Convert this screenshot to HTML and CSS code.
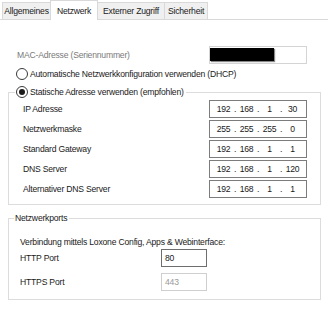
FILE: index.html
```html
<!DOCTYPE html>
<html lang="de">
<head>
<meta charset="utf-8">
<title>Netzwerk</title>
<link rel="stylesheet" href="styles.css">
</head>
<body>
<div class="tabs">
  <div class="tab tab-allg">Allgemeines</div>
  <div class="tab tab-netz active">Netzwerk</div>
  <div class="tab tab-ext">Externer Zugriff</div>
  <div class="tab tab-sich">Sicherheit</div>
</div>
<div class="panel">
  <div class="mac-row">
    <span class="mac-label">MAC-Adresse (Seriennummer)</span>
    <div class="mac-box"><div class="redact"></div></div>
  </div>
  <div class="radio-row">
    <span class="radio"></span>
    <span>Automatische Netzwerkkonfiguration verwenden (DHCP)</span>
  </div>
  <fieldset class="group group-static">
    <legend class="legend legend-radio"><span class="radio checked"></span><span>Statische Adresse verwenden (empfohlen)</span></legend>
    <div class="group-body static-body">
      <div class="field-row">
        <span>IP Adresse</span>
        <div class="ipbox"><span class="oct">192</span><span class="dot">.</span><span class="oct">168</span><span class="dot">.</span><span class="oct">1</span><span class="dot">.</span><span class="oct">30</span></div>
      </div>
      <div class="field-row">
        <span>Netzwerkmaske</span>
        <div class="ipbox"><span class="oct">255</span><span class="dot">.</span><span class="oct">255</span><span class="dot">.</span><span class="oct">255</span><span class="dot">.</span><span class="oct">0</span></div>
      </div>
      <div class="field-row">
        <span>Standard Gateway</span>
        <div class="ipbox"><span class="oct">192</span><span class="dot">.</span><span class="oct">168</span><span class="dot">.</span><span class="oct">1</span><span class="dot">.</span><span class="oct">1</span></div>
      </div>
      <div class="field-row">
        <span>DNS Server</span>
        <div class="ipbox"><span class="oct">192</span><span class="dot">.</span><span class="oct">168</span><span class="dot">.</span><span class="oct">1</span><span class="dot">.</span><span class="oct">120</span></div>
      </div>
      <div class="field-row">
        <span>Alternativer DNS Server</span>
        <div class="ipbox"><span class="oct">192</span><span class="dot">.</span><span class="oct">168</span><span class="dot">.</span><span class="oct">1</span><span class="dot">.</span><span class="oct">1</span></div>
      </div>
    </div>
  </fieldset>
  <fieldset class="group group-ports">
    <legend class="legend legend-text">Netzwerkports</legend>
    <div class="group-body ports-body">
      <div class="ports-note">Verbindung mittels Loxone Config, Apps &amp; Webinterface:</div>
      <div class="port-row">
        <span>HTTP Port</span>
        <div class="portbox">80</div>
      </div>
      <div class="port-row port-row-2">
        <span>HTTPS Port</span>
        <div class="portbox disabled">443</div>
      </div>
    </div>
  </fieldset>
</div>
</body>
</html>
```

FILE: styles.css
```css
* { box-sizing: border-box; }

html, body {
  margin: 0;
  padding: 0;
  background: #ffffff;
}

body {
  width: 328px;
  height: 330px;
  overflow: hidden;
  font-family: "Liberation Sans", Arial, sans-serif;
  font-size: 8.6px;
  letter-spacing: -0.2px;
  color: #1a1a1a;
}

/* Tabs */
.tabs {
  display: flex;
  align-items: flex-end;
  height: 20px;
  padding-left: 2px;
  border-bottom: 1px solid #d9d9d9;
}

.tab {
  height: 17px;
  line-height: 16px;
  text-align: center;
  background: #f0f0f0;
  border: 1px solid #d9d9d9;
  border-bottom: none;
  margin-left: -1px;
  white-space: nowrap;
}

.tab:first-child { margin-left: 0; }

.tab.active {
  height: 20px;
  line-height: 20px;
  margin-bottom: -1px;
  background: #ffffff;
}

.tab-allg { width: 49px; }
.tab-netz { width: 48px; }
.tab-ext { width: 68px; }
.tab-sich { width: 44px; }

/* Panel */
.panel {
  padding-top: 26px;
}

.mac-row {
  display: flex;
  align-items: center;
  height: 18px;
  padding-left: 17px;
  padding-right: 21px;
}

.mac-label {
  flex: 1;
  color: #7a7a7a;
}

.mac-box {
  width: 98px;
  height: 18px;
  border: 1px solid #d4d4d4;
  padding: 1px 0 0 0;
}

.redact {
  width: 64px;
  height: 13px;
  background: #000;
  box-shadow: 1px 1px 1px #888;
}

.radio-row {
  display: flex;
  align-items: center;
  gap: 2px;
  height: 16px;
  margin-top: 2px;
  padding-left: 16px;
}

.radio {
  display: inline-flex;
  align-items: center;
  justify-content: center;
  width: 12px;
  height: 12px;
  border: 1px solid #3a3a3a;
  border-radius: 50%;
  background: #fff;
  flex: none;
}

.radio.checked::after {
  content: "";
  width: 6px;
  height: 6px;
  border-radius: 50%;
  background: #1a1a1a;
}

/* Group boxes */
.group {
  margin: 2px 7px 0 8px;
  padding: 0;
  min-width: 0;
  border: 1px solid #dcdcdc;
}

.legend {
  height: 16px;
  display: flex;
  align-items: center;
  gap: 2px;
  padding: 0 2px 0 1px;
}

.legend-radio { margin-left: 6px; }
.legend-text { margin-left: 5px; }

.static-body {
  padding: 0 13px 6px 14px;
  display: flex;
  flex-direction: column;
  gap: 2px;
}

.field-row {
  display: flex;
  align-items: center;
  justify-content: space-between;
  height: 18px;
}

.ipbox {
  width: 98px;
  height: 18px;
  border: 1px solid #7c7c7c;
  display: flex;
  align-items: center;
  padding-left: 4px;
}

.oct {
  width: 19px;
  text-align: center;
}

.dot {
  width: 4px;
  text-align: center;
}

.group-ports {
  margin-top: 5px;
}

.ports-body {
  padding: 9px 13px 8px 11px;
}

.ports-note {
  height: 14px;
  line-height: 14px;
}

.port-row {
  display: grid;
  grid-template-columns: 141px 46px;
  align-items: center;
  height: 18px;
}

.port-row-2 {
  margin-top: 6px;
}

.portbox {
  height: 18px;
  border: 1px solid #6e6e6e;
  padding: 2px 0 0 3px;
  line-height: 12px;
}

.portbox.disabled {
  border-color: #cfcfcf;
  color: #9a9a9a;
}
```
